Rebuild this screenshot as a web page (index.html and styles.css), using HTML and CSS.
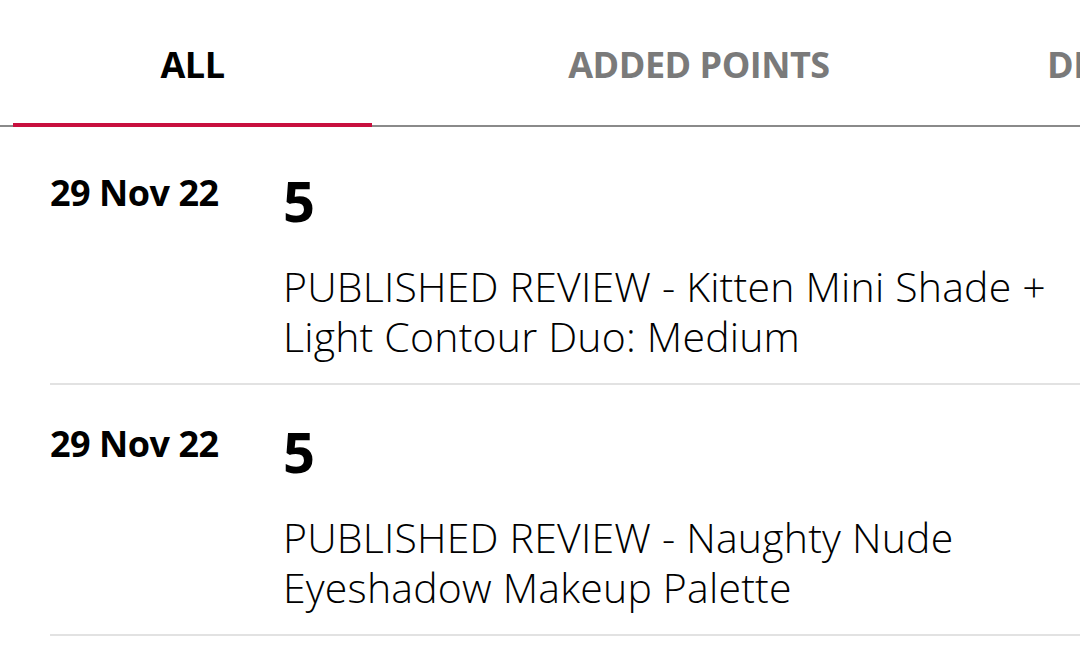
FILE: index.html
```html
<!DOCTYPE html>
<html lang="en">
<head>
    <meta charset="UTF-8">
    <meta name="viewport" content="width=device-width, initial-scale=1.0">
    <title>Points History</title>
    <link rel="stylesheet" href="styles.css">
</head>
<body>
    <!-- Tabs -->
    <nav class="tabs">
        <a href="#" class="tab tab-all active">ALL</a>
        <a href="#" class="tab tab-added">ADDED POINTS</a>
        <a href="#" class="tab tab-deducted">DEDUCTED POINTS</a>
    </nav>

    <!-- Points list -->
    <div class="list">
        <div class="row">
            <div class="date">29 Nov 22</div>
            <div class="info">
                <div class="points">5</div>
                <p class="desc">PUBLISHED REVIEW - Kitten Mini Shade + Light Contour Duo: Medium</p>
            </div>
        </div>
        <div class="row">
            <div class="date">29 Nov 22</div>
            <div class="info">
                <div class="points">5</div>
                <p class="desc">PUBLISHED REVIEW - Naughty Nude Eyeshadow Makeup Palette</p>
            </div>
        </div>
    </div>
</body>
</html>
```

FILE: styles.css
```css
body { font-family: "Open Sans", "Noto Sans", sans-serif; margin: 0; padding: 0; background-color: #fff; color: #000; overflow: hidden; }

.tabs { display: flex; align-items: flex-start; height: 127px; overflow: hidden; white-space: nowrap; background: linear-gradient(#8a8a8a, #8a8a8a) bottom / 100% 2px no-repeat; }
.tab { flex: none; padding: 42px 0 35px; font-size: 36px; line-height: 46px; font-weight: bold; color: #7a7a7a; text-decoration: none; text-align: center; letter-spacing: -0.5px; }
.tab.active { color: #000; border-bottom: 4px solid #c8103e; }
.tab-all { width: 359px; margin-left: 13px; }
.tab-added { width: 654px; }
.tab-deducted { padding-left: 21px; text-align: left; }

.list { margin-left: 50px; padding-top: 7px; }
.row { display: flex; padding: 36px 0 22px; border-bottom: 2px solid #e2e2e2; }
.date { width: 233px; flex: none; margin-top: 3px; font-size: 36px; line-height: 40px; font-weight: bold; letter-spacing: -0.5px; }
.info { flex: 1; }
.points { font-size: 56px; line-height: 60px; font-weight: bold; }
.desc { margin: 31px 0 0; font-size: 41px; line-height: 50px; font-weight: 300; letter-spacing: 0.2px; padding-right: 20px; }
```
